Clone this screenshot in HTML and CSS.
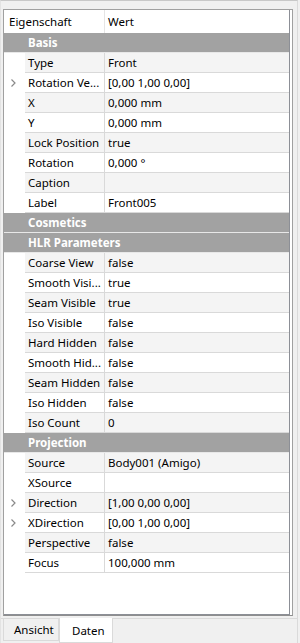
FILE: index.html
```html
<!DOCTYPE html>
<html>
<head>
    <title>Eigenschaften</title>
    <link rel="stylesheet" href="styles.css">
</head>
<body>
    <div class="dock">
        <div class="frame">
            <div class="tree">
                <div class="head">
                    <div class="h-name">Eigenschaft</div>
                    <div class="h-value">Wert</div>
                </div>

                <div class="group">Basis</div>
                <div class="row alt"><div class="branch"></div><div class="name">Type</div><div class="value">Front</div></div>
                <div class="row"><div class="branch"><svg width="5" height="8" viewBox="0 0 5 8"><polyline points="0.5,0.5 4,4 0.5,7.5" fill="none" stroke="#8a8a8a" stroke-width="1.2"/></svg></div><div class="name">Rotation Ve...</div><div class="value">[0,00 1,00 0,00]</div></div>
                <div class="row alt"><div class="branch"></div><div class="name">X</div><div class="value">0,000 mm</div></div>
                <div class="row"><div class="branch"></div><div class="name">Y</div><div class="value">0,000 mm</div></div>
                <div class="row alt"><div class="branch"></div><div class="name">Lock Position</div><div class="value">true</div></div>
                <div class="row"><div class="branch"></div><div class="name">Rotation</div><div class="value">0,000 °</div></div>
                <div class="row alt"><div class="branch"></div><div class="name">Caption</div><div class="value"></div></div>
                <div class="row"><div class="branch"></div><div class="name">Label</div><div class="value">Front005</div></div>

                <div class="group">Cosmetics</div>

                <div class="group">HLR Parameters</div>
                <div class="row alt"><div class="branch"></div><div class="name">Coarse View</div><div class="value">false</div></div>
                <div class="row"><div class="branch"></div><div class="name">Smooth Visi...</div><div class="value">true</div></div>
                <div class="row alt"><div class="branch"></div><div class="name">Seam Visible</div><div class="value">true</div></div>
                <div class="row"><div class="branch"></div><div class="name">Iso Visible</div><div class="value">false</div></div>
                <div class="row alt"><div class="branch"></div><div class="name">Hard Hidden</div><div class="value">false</div></div>
                <div class="row"><div class="branch"></div><div class="name">Smooth Hid...</div><div class="value">false</div></div>
                <div class="row alt"><div class="branch"></div><div class="name">Seam Hidden</div><div class="value">false</div></div>
                <div class="row"><div class="branch"></div><div class="name">Iso Hidden</div><div class="value">false</div></div>
                <div class="row alt"><div class="branch"></div><div class="name">Iso Count</div><div class="value">0</div></div>

                <div class="group">Projection</div>
                <div class="row alt"><div class="branch"></div><div class="name">Source</div><div class="value">Body001 (Amigo)</div></div>
                <div class="row"><div class="branch"></div><div class="name">XSource</div><div class="value"></div></div>
                <div class="row alt"><div class="branch"><svg width="5" height="8" viewBox="0 0 5 8"><polyline points="0.5,0.5 4,4 0.5,7.5" fill="none" stroke="#8a8a8a" stroke-width="1.2"/></svg></div><div class="name">Direction</div><div class="value">[1,00 0,00 0,00]</div></div>
                <div class="row"><div class="branch"><svg width="5" height="8" viewBox="0 0 5 8"><polyline points="0.5,0.5 4,4 0.5,7.5" fill="none" stroke="#8a8a8a" stroke-width="1.2"/></svg></div><div class="name">XDirection</div><div class="value">[0,00 1,00 0,00]</div></div>
                <div class="row alt"><div class="branch"></div><div class="name">Perspective</div><div class="value">false</div></div>
                <div class="row"><div class="branch"></div><div class="name">Focus</div><div class="value">100,000 mm</div></div>
            </div>
        </div>
        <div class="tabs">
            <div class="tab">Ansicht</div>
            <div class="tab active">Daten</div>
        </div>
    </div>
</body>
</html>
```

FILE: styles.css
```css
body { margin: 0; background: #f0f0f0; font-family: "Noto Sans", "Segoe UI", sans-serif; font-size: 11.5px; color: #000; }
.dock { height: 643px; box-sizing: border-box; border-left: 1px solid #e3e3e3; border-right: 1px solid #dadada; width: 298px; border-top: 1px solid #c8c8c8; padding-top: 8px; display: flex; flex-direction: column; }
.frame { margin-left: 2px; margin-right: 4px; height: 607px; box-sizing: border-box; border: 1px solid #a0a0a0; border-bottom-color: #8e8e8e; background: #fff; padding-right: 2px; }
.tree { height: 100%; border-right: 1px solid #8c8f96; border-bottom: 1px solid #8c8f96; box-sizing: border-box; }
.head { display: flex; height: 23px; line-height: 23px; }
.h-name { width: 95px; padding-left: 5px; border-right: 1px solid #e5e5e5; }
.h-value { padding-left: 3px; }
.group { height: 19px; line-height: 20px; background: #a2a2a2; color: #fff; font-weight: bold; padding-left: 24px; border-bottom: 1px solid #e8e8e8; }
.row { display: flex; height: 20px; line-height: 20px; }
.branch { width: 21px; background: #fff; display: flex; align-items: center; padding-left: 7px; box-sizing: border-box; }
.name { width: 76px; padding-left: 3px; background: #fff; border-right: 1px solid #d9d9d9; border-bottom: 1px solid #d9d9d9; white-space: nowrap; overflow: hidden; }
.value { flex: 1; padding-left: 3px; background: #fff; border-bottom: 1px solid #d9d9d9; white-space: nowrap; }
.alt .name, .alt .value { background: #f4f4f4; }
.tabs { display: flex; margin-top: 2px; border-top: 1px solid #dadada; flex: 1; }
.tab { height: 22px; line-height: 21px; padding: 0 10px; background: #f0f0f0; border: 1px solid #dadada; border-top: none; box-sizing: border-box; margin-left: 2px; width: 56px; }
.tab.active { background: #fff; margin-left: 0; width: 54px; height: 25px; line-height: 25px; margin-top: -1px; padding: 0 12px; }
```
